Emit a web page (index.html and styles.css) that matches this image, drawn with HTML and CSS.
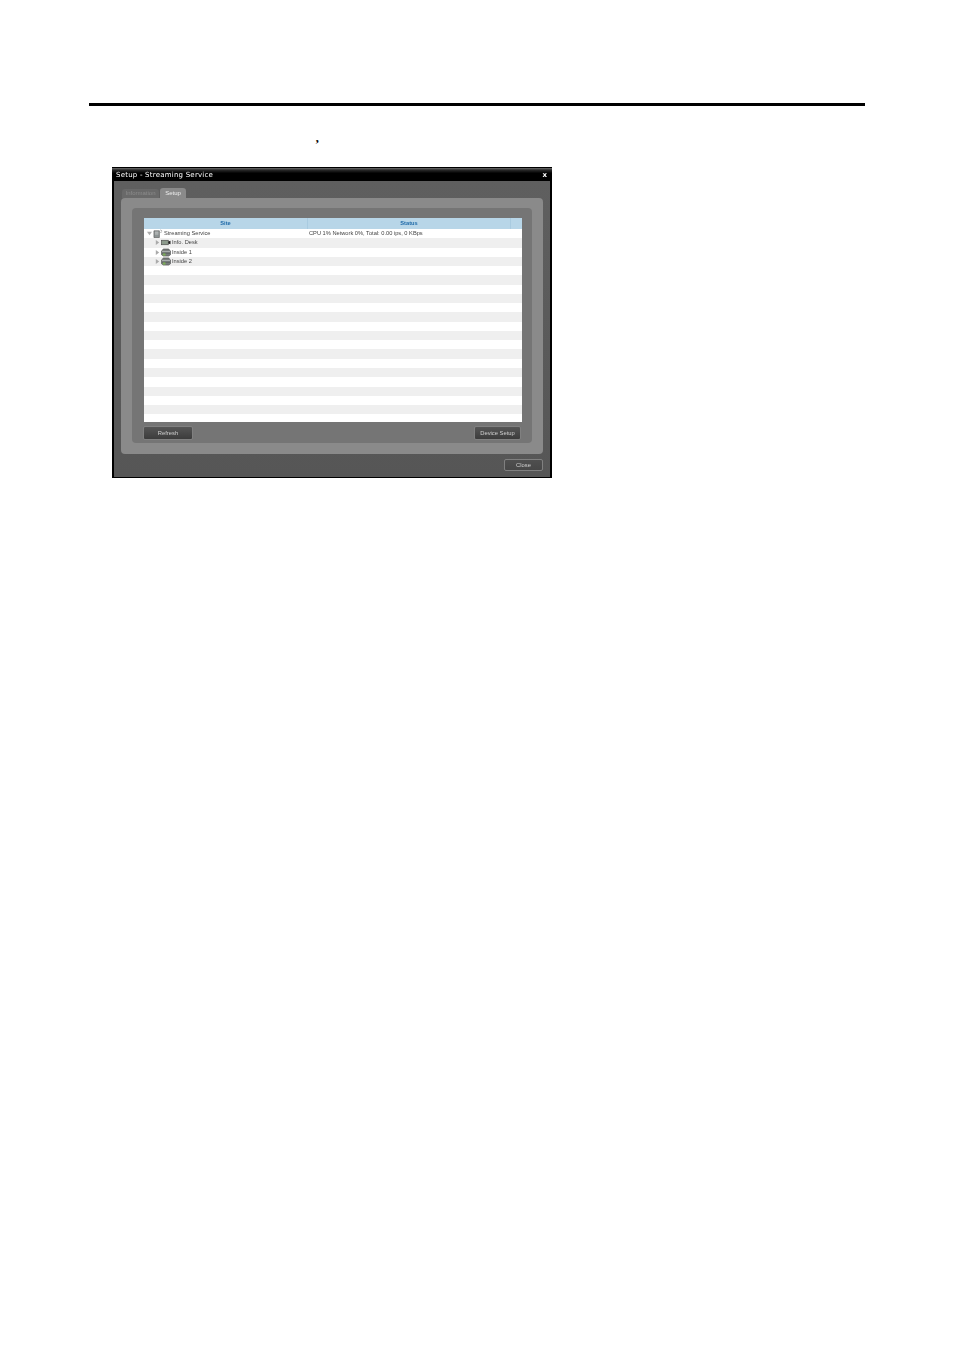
FILE: index.html
```html
<!DOCTYPE html>
<html lang="en">
<head>
<meta charset="utf-8">
<title>Setup - Streaming Service</title>
<link rel="stylesheet" href="styles.css">
</head>
<body>
<div class="page">
  <div class="rule"></div>
  <p class="note">’</p>
  <section class="window">
    <header class="titlebar">
      <span class="title">Setup - Streaming Service</span>
      <span class="close-x">x</span>
    </header>
    <div class="window-body">
      <nav class="tabs">
        <span class="tab">Information</span>
        <span class="tab tab-active">Setup</span>
      </nav>
      <div class="panel">
        <div class="inner">
          <div class="table">
            <div class="row head"><span class="c1">Site</span><span class="c2">Status</span><span class="c3"></span></div>
            <div class="row">
              <span class="c1 tree lv0">
                <svg class="arrow" viewBox="0 0 6 6"><path d="M0 1h6L3 5z"/></svg>
                <svg class="ico" viewBox="0 0 11 10"><path d="M1 2h6v7.500H1z" fill="#8d9494" stroke="#555" stroke-width=".7"/><path d="M2 3.500h4M2 5.500h4" stroke="#e4e4e4" stroke-width=".7"/><path d="M8 1l2 1M8 4l2-1" stroke="#888" stroke-width=".7"/></svg>
                Streaming Service
              </span>
              <span class="c2">CPU 1% Network 0%, Total: 0.00 ips, 0 KBps</span><span class="c3"></span>
            </div>
            <div class="row">
              <span class="c1 tree lv1">
                <svg class="arrow" viewBox="0 0 6 6"><path d="M1 0v6l4-3z"/></svg>
                <svg class="ico" viewBox="0 0 11 10"><rect x=".5" y="2.500" width="7.500" height="5" fill="#8c9a8c" stroke="#444" stroke-width=".7"/><path d="M8 4l2.500-1v4L8 6z" fill="#222"/></svg>
                Info. Desk
              </span>
              <span class="c2"></span><span class="c3"></span>
            </div>
            <div class="row">
              <span class="c1 tree lv1">
                <svg class="arrow" viewBox="0 0 6 6"><path d="M1 0v6l4-3z"/></svg>
                <svg class="ico" viewBox="0 0 11 10"><path d="M2.500 1h6L10.500 3.500v4L8.500 9h-6L.5 7.500v-4z" fill="#767b7b" stroke="#444" stroke-width=".6"/><path d="M1 3.800h9" stroke="#c4c8c8" stroke-width=".8"/><path d="M1 6h9" stroke="#4c5050" stroke-width=".6"/><rect x="2" y="6" width="3" height="2.500" fill="#7dab5a"/></svg>
                Inside 1
              </span>
              <span class="c2"></span><span class="c3"></span>
            </div>
            <div class="row">
              <span class="c1 tree lv1">
                <svg class="arrow" viewBox="0 0 6 6"><path d="M1 0v6l4-3z"/></svg>
                <svg class="ico" viewBox="0 0 11 10"><path d="M2.500 1h6L10.500 3.500v4L8.500 9h-6L.5 7.500v-4z" fill="#767b7b" stroke="#444" stroke-width=".6"/><path d="M1 3.800h9" stroke="#c4c8c8" stroke-width=".8"/><path d="M1 6h9" stroke="#4c5050" stroke-width=".6"/><rect x="2" y="6" width="3" height="2.500" fill="#7dab5a"/></svg>
                Inside 2
              </span>
              <span class="c2"></span><span class="c3"></span>
            </div>
            <div class="row"></div><div class="row"></div><div class="row"></div><div class="row"></div>
            <div class="row"></div><div class="row"></div><div class="row"></div><div class="row"></div>
            <div class="row"></div><div class="row"></div><div class="row"></div><div class="row"></div>
            <div class="row"></div><div class="row"></div><div class="row"></div><div class="row"></div>
          </div>
          <div class="actions">
            <button class="btn btn-refresh">Refresh</button>
            <button class="btn btn-device">Device Setup</button>
          </div>
        </div>
      </div>
      <div class="footer"><button class="btn btn-close">Close</button></div>
    </div>
  </section>
</div>
</body>
</html>
```
FILE: styles.css
```css
* { box-sizing: border-box; }
html, body { margin: 0; padding: 0; background: #fff; }
.page { width: 954px; height: 1348px; padding-top: 103px; font-family: "Liberation Sans", Arial, sans-serif; overflow: hidden; }
.rule { height: 3px; margin: 0 89px; background: #000; }
.note { margin: 0; height: 61px; padding: 30px 0 0 315px; font: bold 13px/16px "Liberation Serif", serif; color: #000; }
.window { width: 440px; height: 311px; margin-left: 112px; background: #000; padding: 1px 2px 1px; display: flex; flex-direction: column; filter: blur(.3px); }
.titlebar { height: 13px; flex: none; display: flex; justify-content: space-between; align-items: center; padding: 1px 5px 0 4px; color: #fff; font: 7px/12px "DejaVu Sans", sans-serif; background: linear-gradient(#6e6e6e 0, #2a2a2a 15%, #000 40%, #000 100%); margin: 0 -2px; }
.title { letter-spacing: .22px; }
.close-x { font-weight: bold; }
.window-body { flex: 1; background: linear-gradient(#5f5f5f, #565656); padding: 7px 7px 0; display: flex; flex-direction: column; }
.tabs { display: flex; gap: 1px; height: 10px; padding-left: 1px; align-items: flex-end; }
.tab { width: 37px; height: 9px; border-radius: 3px 3px 0 0; background: #696969; color: #8c8c8c; font-size: 6px; line-height: 9px; text-align: center; }
.tab-active { width: 26px; height: 10px; background: #8a8a8a; color: #eee; line-height: 10px; }
.panel { height: 256px; flex: none; background: #8a8a8a; border-radius: 4px; padding: 10px 11px; }
.inner { height: 235px; background: #757575; border-radius: 4px; padding: 10px 10px 0 12px; }
.table { height: 204px; background: #fff; overflow: hidden; }
.row { display: flex; height: 9.27px; color: #444; font-size: 5.7px; line-height: 9.27px; white-space: nowrap; }
.row:nth-child(odd):not(.head) { background: #efefef; }
.row.head { height: 11px; line-height: 11px; background: #b8d6e8; color: #1f6aa8; font-weight: bold; text-align: center; }
.c1 { width: 163px; flex: none; }
.c2 { width: 204px; flex: none; padding-left: 2px; }
.head .c2 { padding-left: 0; border-left: 1px solid #a9cbe0; border-right: 1px solid #a9cbe0; }
.c3 { flex: 1; }
.tree { display: flex; align-items: center; gap: 1px; }
.lv0 { padding-left: 3px; }
.lv1 { padding-left: 11px; }
.arrow { width: 5px; height: 5px; fill: #aaa; flex: none; }
.ico { width: 10px; height: 9px; flex: none; }
.actions { display: flex; justify-content: space-between; padding: 4px 1px 0 0; margin-left: -1px; }
.btn { padding: 0; height: 14px; border: 1px solid #808080; border-radius: 2px; background: linear-gradient(#555, #3c3c3c); color: #d0d0d0; font: 5.8px/12px "Liberation Sans", Arial, sans-serif; }
.btn-refresh { width: 50px; }
.btn-device { width: 47px; }
.footer { display: flex; justify-content: flex-end; padding-top: 5px; }
.btn-close { width: 39px; height: 12px; line-height: 10px; background: linear-gradient(#4f4f4f, #474747); }
```
